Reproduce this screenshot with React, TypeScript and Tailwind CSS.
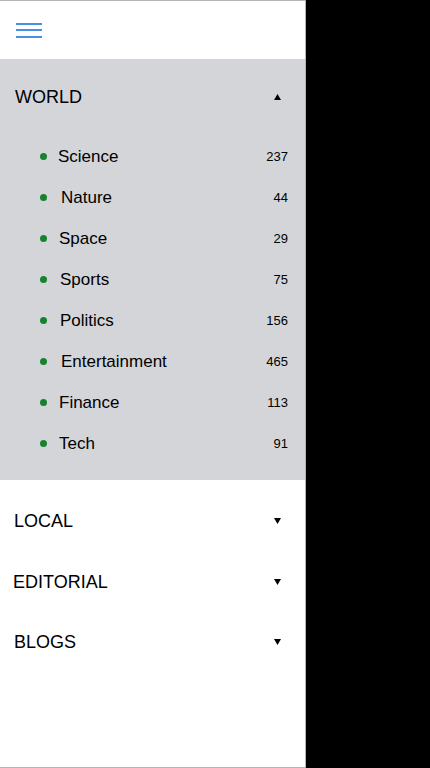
import React from "react";

const items = [
  { name: "Science", count: 237, tx: "ml-[11px]" },
  { name: "Nature", count: 44, tx: "ml-[14px]" },
  { name: "Space", count: 29, tx: "ml-[12px]" },
  { name: "Sports", count: 75, tx: "ml-[13px]" },
  { name: "Politics", count: 156, tx: "ml-[13px]" },
  { name: "Entertainment", count: 465, tx: "ml-[14px]" },
  { name: "Finance", count: 113, tx: "ml-[12px]" },
  { name: "Tech", count: 91, tx: "ml-[12px]" },
];

function Up() {
  return (
    <svg width="7" height="6" viewBox="0 0 7 6">
      <polygon points="3.5,0 7,6 0,6" fill="#000" />
    </svg>
  );
}
function Down() {
  return (
    <svg width="7" height="6" viewBox="0 0 7 6">
      <polygon points="0,0 7,0 3.5,6" fill="#000" />
    </svg>
  );
}

export default function App() {
  return (
    <div className="w-[430px] h-[768px] bg-black flex" style={{ fontFamily: '"Liberation Sans", Arial, sans-serif' }}>
      <div className="w-[306px] h-[768px] bg-white border-t border-r border-b border-[#b4b4b4] flex flex-col text-black">
        <div className="h-[58px] flex items-center pl-[16px]">
          <svg width="26" height="16" viewBox="0 0 26 16">
            <rect x="0" y="1" width="26" height="2" fill="#4a90e2" />
            <rect x="0" y="7" width="26" height="2" fill="#4a90e2" />
            <rect x="0" y="14" width="26" height="2" fill="#4a90e2" />
          </svg>
        </div>
        <div className="bg-[#d4d5d9] h-[421px] flex flex-col">
          <div className="h-[77px] flex items-center justify-between pl-[15px] pr-[24px] pb-[2px]">
            <span className="text-[18px] leading-none">WORLD</span>
            <Up />
          </div>
          {items.map((it) => (
            <div key={it.name} className="h-[41px] flex items-center pl-[40px] pr-[17px]">
              <span className="w-[7px] h-[7px] rounded-full bg-[#17822d]" />
              <span className={`${it.tx} text-[17px] leading-none`}>{it.name}</span>
              <span className="ml-auto text-[13px] leading-none">{it.count}</span>
            </div>
          ))}
        </div>
        <div className="pt-[11px] flex flex-col">
          {[
            { n: "LOCAL", p: "pl-[14px]", h: "h-[60px]" },
            { n: "EDITORIAL", p: "pl-[13px]", h: "h-[61px]" },
            { n: "BLOGS", p: "pl-[14px]", h: "h-[60px]" },
          ].map((s) => (
            <div key={s.n} className={`${s.h} flex items-center justify-between ${s.p} pr-[24px]`}>
              <span className="text-[18px] leading-none">{s.n}</span>
              <Down />
            </div>
          ))}
        </div>
      </div>
    </div>
  );
}
